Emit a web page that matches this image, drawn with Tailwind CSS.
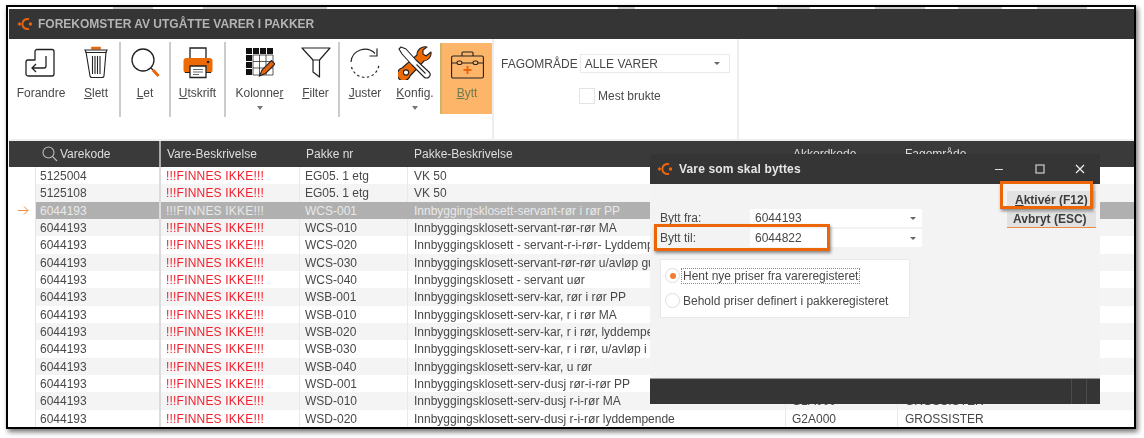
<!DOCTYPE html>
<html lang="en">
<head>
    <meta charset="UTF-8">
    <title>Forekomster av utgåtte varer i pakker</title>
    <script src="https://cdn.jsdelivr.net/npm/@tailwindcss/browser@4"></script>
</head>
<body class="bg-white w-[1144px] h-[438px] overflow-hidden font-['Liberation_Sans',Arial,sans-serif] text-[12px] text-[#484848]">
<div class="pt-[5px] pl-[6px] blur-[0.4px]">
    <!-- window frame -->
    <div class="relative w-[1130px] h-[424px] border-2 border-black bg-white pl-px shadow-[2px_3px_5px_rgba(0,0,0,0.55)] overflow-hidden">
        <!-- clipped bits of the window behind -->
        <div class="flex h-[2px]">
            <div class="w-[104px]"></div><div class="w-[40px] bg-[#ccc]"></div>
            <div class="w-[50px]"></div><div class="w-[124px] bg-[#ccc]"></div>
            <div class="w-[291px]"></div><div class="w-[17px] bg-[#ccc]"></div>
            <div class="w-[142px]"></div><div class="w-[33px] bg-[#ccc]"></div>
            <div class="w-[65px]"></div><div class="w-[50px] bg-[#ccc]"></div>
            <div class="w-[33px]"></div><div class="w-[44px] bg-[#ccc]"></div>
            <div class="w-[35px]"></div><div class="w-[50px] bg-[#ccc]"></div>
        </div>

        <!-- title bar -->
        <div class="h-[30px] bg-[#353535] flex items-center pl-[8px] gap-[4px]">
            <svg width="17" height="16" viewBox="0 0 17 16" fill="none">
                <path d="M12 3.300A5 5 0 1 0 12 12.700" stroke="#e8650f" stroke-width="2"/>
                <path d="M0.500 8L2.500 6 4.500 8 2.500 10z" fill="#e8650f"/>
                <circle cx="13.500" cy="8" r="1.700" fill="#e8650f"/>
            </svg>
            <span class="font-bold text-[#b4b4b4] text-[12px]">FOREKOMSTER AV UTGÅTTE VARER I PAKKER</span>
        </div>

        <!-- toolbar -->
        <div class="h-[102px] flex border-b-2 border-[#eee] leading-[14px]">
            <div class="w-[64px] flex flex-col items-center">
                <div class="h-[47px] flex items-center">
                    <svg width="32" height="32" viewBox="0 0 32 32" fill="none" stroke="#222" stroke-width="1.300"><path d="M12 2.500h15a2 2 0 0 1 2 2V27a2 2 0 0 1-2 2H3a2 2 0 0 1-2-2V15a2 2 0 0 1 2-2h7V4.500a2 2 0 0 1 2-2z" stroke-linejoin="round"/><path d="M21 9v10a2 2 0 0 1-2 2H7M11 17l-4 4 4 4"/></svg>
                </div>
                <span>Forandre</span>
            </div>
            <div class="w-[46px] flex flex-col items-center">
                <div class="h-[47px] flex items-center">
                    <svg width="26" height="34" viewBox="0 0 26 34" fill="none" stroke="#222" stroke-width="1.100"><path d="M9 3.500V1.500h8v2" fill="#e8650f" stroke="#e8650f" stroke-width="1.500"/><path d="M2 4h22l-1 2-2 24a2 2 0 0 1-2 1.500H9a2 2 0 0 1-2-1.500L3 6z"/><path d="M2.500 6.500h21M9.500 10v18M12 10v18M14.500 10v18M17 10v18"/></svg>
                </div>
                <span><u>S</u>lett</span>
            </div>
            <div class="w-[2px] h-[75px] mt-[3px] bg-[#ccc]"></div>
            <div class="w-[48px] flex flex-col items-center">
                <div class="h-[47px] flex items-center">
                    <svg width="30" height="32" viewBox="0 0 30 32" fill="none"><circle cx="13" cy="13" r="11" stroke="#222" stroke-width="1.300"/><path d="M21 21l2 2" stroke="#222" stroke-width="1.300"/><path d="M23 23l5.500 6" stroke="#e8650f" stroke-width="3"/></svg>
                </div>
                <span><u>L</u>et</span>
            </div>
            <div class="w-[2px] h-[75px] mt-[3px] bg-[#ccc]"></div>
            <div class="w-[53px] flex flex-col items-center">
                <div class="h-[47px] flex items-center">
                    <svg width="30" height="32" viewBox="0 0 30 32" fill="none"><path d="M7 13V1h16v12" stroke="#222" stroke-width="1.300"/><rect x="0.500" y="11" width="29" height="15" rx="3" fill="#ee6a05"/><circle cx="25" cy="15" r="1.300" fill="#222"/><path d="M7 19h16v11.500H7z" fill="#fff" stroke="#222" stroke-width="1.300"/><path d="M10 22.500h10M10 25h10M10 27.500h6" stroke="#444" stroke-width="0.800"/><path d="M2 25.500h5M23 25.500h5" stroke="#222"/></svg>
                </div>
                <span><u>U</u>tskrift</span>
            </div>
            <div class="w-[2px] h-[75px] mt-[3px] bg-[#ccc]"></div>
            <div class="w-[67px] flex flex-col items-center">
                <div class="h-[47px] flex items-center">
                    <svg width="30" height="30" viewBox="0 0 30 30" fill="none"><path d="M1 0h6v6H1zM8 0h6v6H8zM15 0h6v6h-6zM22 0h6v6h-6zM1 7h6v6H1zM1 14h6v6H1zM1 21h6v6H1z" fill="#111"/><path d="M8 7h20v20H8zM8 13.500h20M8 20h20M14.500 7v20M21 7v20" stroke="#333" stroke-width="0.800"/><path d="M14.500 28l2.500-6 9.500-9.500 3.500 3.500-9.500 9.500z" fill="#e8650f" stroke="#222" stroke-width="1.100"/></svg>
                </div>
                <span>Kolonne<u>r</u></span>
                <span class="w-0 h-0 mt-[6px] border-x-[3.5px] border-x-transparent border-t-[4px] border-t-[#777]"></span>
            </div>
            <div class="w-[45px] flex flex-col items-center">
                <div class="h-[47px] flex items-center">
                    <svg width="30" height="31" viewBox="0 0 30 31" fill="none" stroke="#222" stroke-width="1.200" stroke-linejoin="round"><path d="M1 1h28L18.500 13H12z"/><path d="M12 13v12l6.500 5V13"/></svg>
                </div>
                <span><u>F</u>ilter</span>
            </div>
            <div class="w-[2px] h-[75px] mt-[3px] bg-[#ccc]"></div>
            <div class="w-[50px] flex flex-col items-center">
                <div class="h-[47px] flex items-center">
                    <svg width="32" height="32" viewBox="0 0 32 32" fill="none" stroke="#222" stroke-width="1.200"><path d="M26 6.500A14 14 0 0 0 2 15"/><path d="M2.500 20A14 14 0 0 0 30 17" stroke-dasharray="2.500 2.500"/><path d="M28 1.500v7.500h-7.500"/></svg>
                </div>
                <span><u>J</u>uster</span>
            </div>
            <div class="w-[50px] flex flex-col items-center">
                <div class="h-[47px] flex items-center">
                    <svg width="34" height="34" viewBox="0 0 34 34" fill="none" stroke="#222" stroke-width="1.100" stroke-linejoin="round"><path d="M33 6l-5 4-3-2V4l4-3a8 8 0 0 0-10 8L4 22a6.500 6.500 0 1 0 8 8l14-15a8 8 0 0 0 7-9z" fill="#ee6a05"/><circle cx="8" cy="26.500" r="2.600" fill="#fff"/><path d="M1 3l2-2 5 2 10 11 13 12a3.500 3.500 0 0 1-5 5L14 19 4 8z" fill="#fff"/><path d="M18.500 18.500l9 9"/></svg>
                </div>
                <span><u>K</u>onfig.</span>
                <span class="w-0 h-0 mt-[6px] border-x-[3.5px] border-x-transparent border-t-[4px] border-t-[#777]"></span>
            </div>
            <div class="w-[52px] h-[71px] mt-[4px] bg-[#fdb56a] border-l-[2px] border-[#cdb469] flex flex-col items-center">
                <div class="h-[43px] flex items-center">
                    <svg width="33" height="28" viewBox="0 0 33 28" fill="none" stroke="#222" stroke-width="1.100"><path d="M11 5V2a1 1 0 0 1 1-1h9a1 1 0 0 1 1 1v3"/><rect x="0.600" y="5" width="31.800" height="22" rx="1.500"/><path d="M1 12h5M11 12h11M27 12h5"/><rect x="6" y="10" width="5" height="3.500" rx="1.700"/><rect x="22" y="10" width="5" height="3.500" rx="1.700"/><path d="M16.500 15v8M12.500 19h8" stroke="#e8650f" stroke-width="2"/></svg>
                </div>
                <span class="text-[#6f7a50]"><u>B</u>ytt</span>
            </div>
            <div class="w-[247px] border-x-2 border-[#eee] pl-[7px] pt-[15px]">
                <div class="flex items-center gap-[2px]">
                    <span>FAGOMRÅDE</span>
                    <div class="w-[150px] h-[19px] border border-[#eaeaea] flex items-center justify-between pl-[4px] pr-[9px]">
                        <span>ALLE VARER</span>
                        <span class="w-0 h-0 border-x-[3.5px] border-x-transparent border-t-[3.5px] border-t-[#666]"></span>
                    </div>
                </div>
                <div class="flex items-center gap-[3px] ml-[78px] mt-[15px]">
                    <span class="w-[16px] h-[16px] border border-[#e4e4e4]"></span>
                    <span>Mest brukte</span>
                </div>
            </div>
        </div>

        <!-- table header -->
        <div class="grid grid-cols-[27px_125px_139px_108px_378px_112px_1fr] h-[26px] items-center bg-[#3a3a3a] text-[#dedede]">
            <div></div>
            <div class="flex items-center gap-[2px] pl-[6px] h-full border-r-2 border-[#aaa]">
                <svg width="16" height="16" viewBox="0 0 16 16" fill="none" stroke="#bbb" stroke-width="1.100"><circle cx="6.500" cy="6.500" r="5.500"/><path d="M10.500 10.500l4.500 4.500"/></svg>
                <span>Varekode</span>
            </div>
            <div class="pl-[6px]">Vare-Beskrivelse</div>
            <div class="pl-[6px]">Pakke nr</div>
            <div class="pl-[6px]">Pakke-Beskrivelse</div>
            <div class="pl-[7px]">Akkordkode</div>
            <div class="pl-[7px]">Fagområde</div>
        </div>

        <!-- rows, filled in below -->
        <div id="rows"></div>

        <!-- dialog -->
        <div class="absolute left-[642px] top-[147px] w-[450px] h-[250px] bg-[#f3f3f3] flex flex-col">
            <div class="h-[30px] bg-[#353535] flex items-center pl-[7px] shrink-0">
                <svg width="17" height="16" viewBox="0 0 17 16" fill="none">
                    <path d="M12 3.300A5 5 0 1 0 12 12.700" stroke="#e8650f" stroke-width="2"/>
                    <path d="M0.500 8L2.500 6 4.500 8 2.500 10z" fill="#e8650f"/>
                    <circle cx="13.500" cy="8" r="1.700" fill="#e8650f"/>
                </svg>
                <span class="ml-[5px] font-bold text-[12px] tracking-[0.15px] text-[#e6e6e6]">Vare som skal byttes</span>
                <div class="ml-auto flex items-center">
                    <svg width="40" height="14" viewBox="0 0 40 14" fill="none" stroke="#ddd"><path d="M15 7.500h8"/></svg>
                    <svg width="40" height="14" viewBox="0 0 40 14" fill="none" stroke="#ddd" stroke-width="1.100"><rect x="16" y="3" width="8" height="8"/></svg>
                    <svg width="40" height="14" viewBox="0 0 40 14" fill="none" stroke="#eee" stroke-width="1.200"><path d="M16 3l8 8M24 3l-8 8"/></svg>
                </div>
            </div>
            <div class="flex-1 relative pl-[10px]">
                <div class="pt-[25px] flex flex-col gap-[2px]">
                    <div class="flex items-center h-[18px]">
                        <span class="w-[90px]">Bytt fra:</span>
                        <div class="w-[172px] h-[18px] bg-white flex items-center justify-between pl-[5px] pr-[6px]">
                            <span>6044193</span><span class="w-0 h-0 border-x-[3px] border-x-transparent border-t-[3px] border-t-[#666]"></span>
                        </div>
                    </div>
                    <div class="flex items-center h-[18px]">
                        <span class="w-[90px]">Bytt til:</span>
                        <div class="w-[172px] h-[18px] bg-white flex items-center justify-between pl-[5px] pr-[6px]">
                            <span>6044822</span><span class="w-0 h-0 border-x-[3px] border-x-transparent border-t-[3px] border-t-[#666]"></span>
                        </div>
                    </div>
                </div>
                <div class="mt-[12px] w-[250px] h-[59px] bg-white border border-[#e9e9e9] px-[4px] pt-[8px] flex flex-col gap-[10px]">
                    <div class="flex items-center gap-[1px] h-[15px]">
                        <span class="w-[15px] h-[15px] rounded-full border border-[#ddd] flex items-center justify-center"><span class="w-[6px] h-[6px] rounded-full bg-[#f47c30]"></span></span>
                        <span class="border border-dotted border-[#888] px-px leading-[14px]">Hent nye priser fra vareregisteret</span>
                    </div>
                    <div class="flex items-center gap-[3px] h-[15px]">
                        <span class="w-[15px] h-[15px] rounded-full border border-[#ddd]"></span>
                        <span>Behold priser definert i pakkeregisteret</span>
                    </div>
                </div>
                <!-- buttons -->
                <div class="absolute right-[4px] top-[7px] w-[89px] flex flex-col gap-[3px] font-bold text-[#3c3c3c]">
                    <div class="h-[17px] bg-[#e2e2e2] flex items-center pl-[8px]"><span><u>A</u>ktivér (F12)</span></div>
                    <div class="h-[17px] bg-[#e2e2e2] border-b border-[#ee8a45] flex items-center pl-[6px]">Avbryt (ESC)</div>
                </div>
            </div>
            <div class="h-[26px] bg-[#353535] border-t border-[#9a9a9a] flex justify-end shrink-0">
                <div class="w-[15px] border-l border-[#4c4c4c]"></div>
                <div class="w-[14px] border-l border-[#4c4c4c]"></div>
            </div>
        </div>

        <!-- orange call-outs -->
        <div class="absolute left-[646px] top-[217px] w-[176px] h-[27px] border-[3px] border-[#ec6608] shadow-[1px_2px_3px_rgba(0,0,0,0.45)]"></div>
        <div class="absolute left-[992px] top-[174px] w-[93px] h-[28px] border-[3px] border-[#ec6608] shadow-[1px_2px_3px_rgba(0,0,0,0.45)]"></div>
    </div>
</div>
<script>
    // table rows: code, package no, package text
    const rows = [
        ['5125004', 'EG05. 1 etg', 'VK 50'],
        ['5125108', 'EG05. 1 etg', 'VK 50'],
        ['6044193', 'WCS-001', 'Innbyggingsklosett-servant-rør i rør PP'],
        ['6044193', 'WCS-010', 'Innbyggingsklosett-servant-rør-rør MA'],
        ['6044193', 'WCS-020', 'Innbyggingsklosett - servant-r-i-rør- Lyddempende'],
        ['6044193', 'WCS-030', 'Innbyggingsklosett-servant-rør-rør u/avløp gulv'],
        ['6044193', 'WCS-040', 'Innbyggingsklosett - servant uør'],
        ['6044193', 'WSB-001', 'Innbyggingsklosett-serv-kar, rør i rør PP'],
        ['6044193', 'WSB-010', 'Innbyggingsklosett-serv-kar, r i rør MA'],
        ['6044193', 'WSB-020', 'Innbyggingsklosett-serv-kar, r i rør, lyddempende'],
        ['6044193', 'WSB-030', 'Innbyggingsklosett-serv-kar, r i rør, u/avløp i gulv'],
        ['6044193', 'WSB-040', 'Innbyggingsklosett-serv-kar, u rør'],
        ['6044193', 'WSD-001', 'Innbyggingsklosett-serv-dusj rør-i-rør PP'],
        ['6044193', 'WSD-010', 'Innbyggingsklosett-serv-dusj r-i-rør MA'],
        ['6044193', 'WSD-020', 'Innbyggingsklosett-serv-dusj r-i-rør lyddempende'],
    ];
    document.getElementById('rows').innerHTML = rows.map((r, i) => {
        const selected = i === 2;
        const bg = selected ? 'bg-[#b0b0b0] text-[#e9e9e9]' : (i % 2 ? 'bg-[#f4f4f4]' : 'bg-white');
        const red = selected ? '' : 'text-[#f3202e]';
        const line = selected ? 'border-[#b0b0b0]' : 'border-[#e9e9e9]';
        // text that the dialog would cover stops at its left edge
        const clip = i < 13 ? 'w-[236px] overflow-hidden' : '';
        return `<div class="grid grid-cols-[27px_125px_139px_108px_378px_112px_1fr] grid-rows-[17.33px] h-[17.33px] leading-[19px]">
            <div class="bg-white flex items-center justify-center pl-[2px] border-r border-[#e4e4e4]">${selected ? '<svg width="11" height="9" viewBox="0 0 11 9" fill="none" stroke="#f08a3c"><path d="M0 4.500h10M6 .5l4 4-4 4"/></svg>' : ''}</div>
            <div class="${bg} pl-[4px] border-r-2 border-[#dcdcdc]">${r[0]}</div>
            <div class="${bg} ${red} pl-[5px] tracking-[0.2px] border-r ${line}">!!!FINNES IKKE!!!</div>
            <div class="${bg} pl-[5px] border-r ${line}">${r[1]}</div>
            <div class="${bg} pl-[6px] border-r ${line} whitespace-nowrap"><div class="${clip}">${r[2]}</div></div>
            <div class="${bg} pl-[6px] border-r ${line}">${i > 12 ? 'G2A000' : ''}</div>
            <div class="${bg} pl-[7px]">${i > 12 ? 'GROSSISTER' : ''}</div>
        </div>`;
    }).join('');
</script>
</body>
</html>
